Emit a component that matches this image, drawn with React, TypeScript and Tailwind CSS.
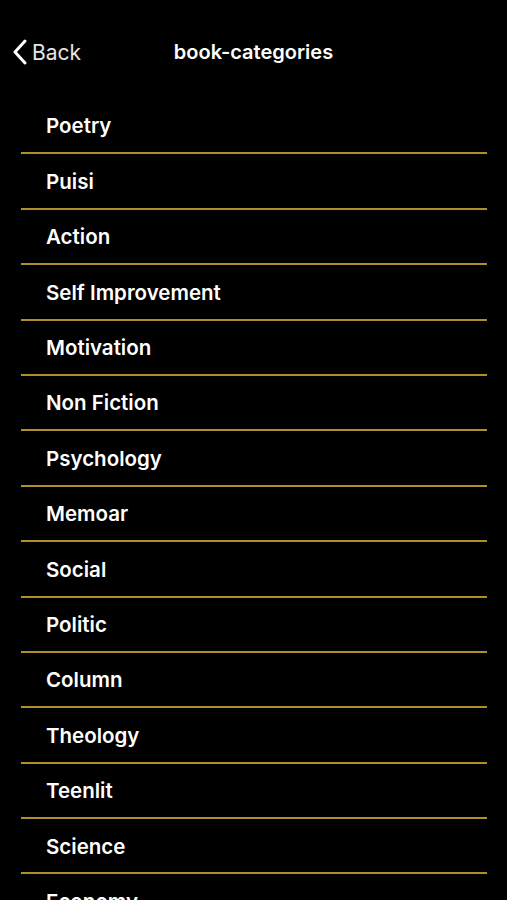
import React from "react";

const categories = [
  "Poetry",
  "Puisi",
  "Action",
  "Self Improvement",
  "Motivation",
  "Non Fiction",
  "Psychology",
  "Memoar",
  "Social",
  "Politic",
  "Column",
  "Theology",
  "Teenlit",
  "Science",
  "Economy",
  "History",
];

const App: React.FC = () => {
  return (
    <div
      className="bg-black h-[900px] overflow-hidden text-white"
      style={{ fontFamily: "Inter, 'Noto Sans', sans-serif" }}
    >
      {/* Header */}
      <div className="relative h-[99px] flex items-start pt-[38px]">
        <button className="flex items-center pl-[12px] gap-[4px] h-[28px]">
          <svg width="16" height="26" viewBox="0 0 16 26" fill="none">
            <path
              d="M13 2 L3 13 L13 24"
              stroke="white"
              strokeWidth="3"
              strokeLinecap="round"
              strokeLinejoin="round"
            />
          </svg>
          <span className="text-[21px] leading-none text-[#e5e5e5]">Back</span>
        </button>
        <div className="absolute left-0 right-0 top-[38px] h-[28px] flex items-center justify-center pointer-events-none">
          <span className="text-[20px] font-semibold leading-none">book-categories</span>
        </div>
      </div>

      {/* List */}
      <ul className="ml-[21px] mr-[20px]">
        {categories.map((c) => (
          <li
            key={c}
            className="h-[55.4px] flex items-center pl-[25px] pt-[2px] border-b-2 border-[#b08f2b]"
          >
            <span className="text-[20.5px] font-semibold leading-none">{c}</span>
          </li>
        ))}
      </ul>
    </div>
  );
};

export default App;
